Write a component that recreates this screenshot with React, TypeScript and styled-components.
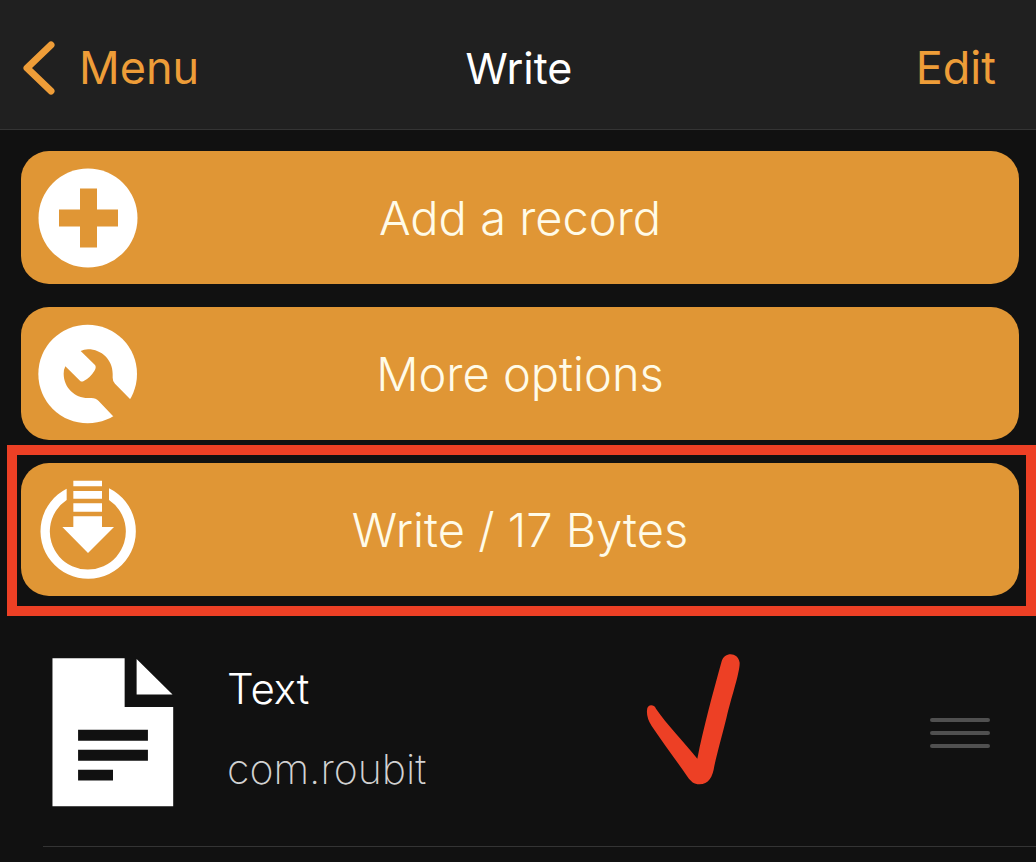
import React from 'react';
import styled, { createGlobalStyle } from 'styled-components';

const accent = '#e09635';
const marker = '#ed4025';

const GlobalStyle = createGlobalStyle`
  *, *::before, *::after { box-sizing: border-box; }
  html, body { margin: 0; min-height: 100%; background: #111111; }
  body { font-family: Inter, "Liberation Sans", sans-serif; overflow-x: hidden; }
  button { font: inherit; border: 0; margin: 0; cursor: pointer; }
`;

const NavBar = styled.header`
  display: grid;
  grid-template-columns: 1fr auto 1fr;
  align-items: center;
  height: 130px;
  padding: 7px 20px 0 22px;
  background: #202020;
  border-bottom: 1px solid #343434;
`;

const BackLink = styled.a`
  display: flex;
  align-items: center;
  gap: 23px;
  justify-self: start;
  color: #ee9d38;
  font-size: 45px;
  line-height: 56px;
  text-decoration: none;
`;

const Title = styled.h1`
  margin: 0;
  color: #fff;
  font-size: 43px;
  font-weight: 400;
  line-height: 56px;
`;

const EditButton = styled.button`
  justify-self: end;
  padding: 0 20px;
  background: none;
  color: #ee9d38;
  && { font-size: 45px; line-height: 56px; }
`;

const Actions = styled.div`
  display: flex;
  flex-direction: column;
  gap: 23px;
  padding: 21px 17px 23px 21px;
`;

const ActionButton = styled.button`
  display: grid;
  grid-template-columns: 100px 1fr 100px;
  align-items: center;
  width: 100%;
  height: 133px;
  padding: 0 17px;
  border-radius: 28px;
  background: ${accent};
  color: #fffbe8;
  && { font-size: 47px; font-weight: 300; line-height: 60px; }
`;

const Highlighted = styled.div`
  position: relative;
  &::after {
    content: '';
    position: absolute;
    inset: -18px -17px -20px -14px;
    border: 10px solid ${marker};
    pointer-events: none;
  }
`;

const Records = styled.ul`
  list-style: none;
  margin: 0;
  padding: 0 0 0 43px;
`;

const RecordRow = styled.li`
  position: relative;
  display: flex;
  align-items: center;
  height: 228px;
  padding: 0 46px 0 9px;
  border-bottom: 1px solid #343434;
`;

const RecordText = styled.div`
  display: flex;
  flex: 1;
  flex-direction: column;
  gap: 24px;
  padding: 0 0 8px 53px;
`;

const RecordName = styled.div`
  color: #fff;
  font-size: 42px;
  font-weight: 300;
  line-height: 56px;
`;

const RecordValue = styled.div`
  color: #d2d2d2;
  font-size: 41px;
  font-weight: 200;
  line-height: 56px;
`;

const DragHandle = styled.button`
  display: flex;
  flex-direction: column;
  gap: 9px;
  width: 60px;
  padding: 0;
  background: none;
`;

const DragBar = styled.span`
  height: 4px;
  border-radius: 2px;
  background: #505050;
`;

const CheckMark = styled.svg`
  position: absolute;
  top: 34px;
  right: 295px;
`;

const PlusIcon = () => (
  <svg width="100" height="100" viewBox="0 0 100 100" aria-hidden="true">
    <circle cx="50" cy="50" r="49.5" fill="#fff" />
    <path d="M42 20.5h17v21h21v17h-21v21h-17v-21h-21v-17h21z" fill={accent} />
  </svg>
);

const WrenchIcon = () => (
  <svg width="100" height="100" viewBox="114 70 300 300" aria-hidden="true">
    <circle cx="263" cy="220" r="148" fill="#fff" />
    <path
      d="M390 295L345 249Q338 243 338 231V219C338 178 305 146 264 146Q252 147 242 151L285 193Q290 200 283 211Q270 232 250 242Q244 244 240 240L196 197Q191 207 191 219C191 260 224 292 264 292H274Q288 292 296 301L338 345L400 390L440 290Z"
      fill={accent}
    />
  </svg>
);

const WriteIcon = () => (
  <svg width="100" height="100" viewBox="114 118 300 300" fill="#fff" aria-hidden="true">
    <path d="M200 144A143 143 0 1 0 327 143V178A114 114 0 1 1 200 178Z" />
    <path d="M220 120h86v17h-86zM220 151h86v23h-86zM220 188h86v25h-86zM220 227h86v32h36L264 337L187 259h33z" />
  </svg>
);

const FileIcon = () => (
  <svg width="122" height="149" viewBox="156 114 366 448" aria-hidden="true">
    <path
      fill="#fff"
      fillRule="evenodd"
      d="M157 115H374V261H520V560H157ZM410 117L518 224H410ZM234 330V363H444V330ZM234 390V423H444V390ZM234 450V482H339V450Z"
    />
  </svg>
);

export default function App() {
  return (
    <>
      <GlobalStyle />
      <NavBar>
        <BackLink href="#menu">
          <svg width="34" height="56" viewBox="66 120 102 168" aria-hidden="true">
            <path d="M153 135L81 204L153 273" fill="none" stroke="#ee9d38" strokeWidth="21" strokeLinecap="round" strokeLinejoin="round" />
          </svg>
          Menu
        </BackLink>
        <Title>Write</Title>
        <EditButton type="button">Edit</EditButton>
      </NavBar>
      <main>
        <Actions>
          <ActionButton type="button">
            <PlusIcon />
            <span>Add a record</span>
          </ActionButton>
          <ActionButton type="button">
            <WrenchIcon />
            <span>More options</span>
          </ActionButton>
          <Highlighted>
            <ActionButton type="button">
              <WriteIcon />
              <span>Write / 17 Bytes</span>
            </ActionButton>
          </Highlighted>
        </Actions>
        <Records>
          <RecordRow>
            <FileIcon />
            <RecordText>
              <RecordName>Text</RecordName>
              <RecordValue>com.roubit</RecordValue>
            </RecordText>
            <CheckMark width="95" height="132" viewBox="78 38 285 396" aria-hidden="true">
              <path
                fill={marker}
                d="M81 210C81 192 101 190 108 205C138 250 195 308 232 355C250 265 278 160 305 63C313 34 354 34 359 67C360 96 331 180 320 230C305 290 291 340 283 377C278 410 266 432 238 432C222 432 213 424 203 410C170 362 133 313 95 257Q79 233 81 210Z"
              />
            </CheckMark>
            <DragHandle type="button" aria-label="Reorder">
              <DragBar />
              <DragBar />
              <DragBar />
            </DragHandle>
          </RecordRow>
        </Records>
      </main>
    </>
  );
}
